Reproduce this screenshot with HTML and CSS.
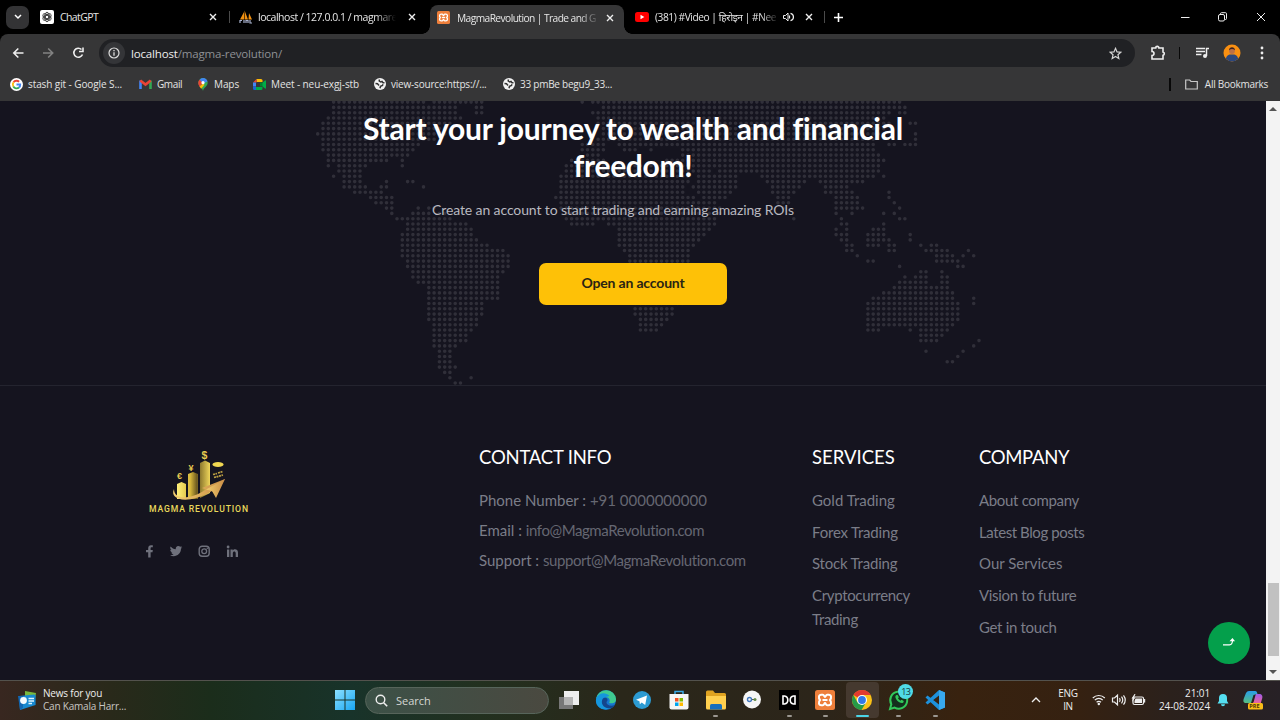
FILE: index.html
```
<!DOCTYPE html>
<html lang="en">
<head>
<meta charset="utf-8">
<title>MagmaRevolution | Trade and Grow</title>
<link rel="stylesheet" href="styles.css">
</head>
<body>
<svg class="defs" width="0" height="0">
  <symbol id="x" viewBox="0 0 8 8"><path d="M1 1l6 6M7 1L1 7" stroke="#eee" stroke-width="1.400"/></symbol>
  <symbol id="globe" viewBox="0 0 12 12"><circle cx="6" cy="6" r="6" fill="#f2f2f2"/><path d="M1.500 5.500l2 .3 1.500 1.700M5.500 1.500L5.200 3l1.500 1 1.300-.5 1 1.300h1.500M6 10.300l.5-2 2-.8.500-1.200" fill="none" stroke="#333" stroke-width="1.500"/></symbol>
  <symbol id="xampp" viewBox="0 0 20 20"><rect width="20" height="20" rx="2.500" fill="#ee7f3b"/><path d="M6.300 4.700h1.500c1.500 0 1.400 2.300 2.200 2.300s.7-2.300 2.200-2.300h1.500c2.800 0 3 3.300 1.300 5.300 1.700 2 1.500 5.300-1.300 5.300h-1.500c-1.500 0-1.400-2.300-2.200-2.300s-.7 2.300-2.200 2.300H6.300C3.500 15.300 3.300 12 5 10c-1.700-2-1.500-5.300 1.300-5.300z" fill="none" stroke="#fff" stroke-width="2"/><path d="M7.500 10h5" stroke="#fff" stroke-width="2"/></symbol>
</svg>
<div class="screen">
  <header class="tabs">
    <div class="tabsearch"><svg width="8" height="6" viewBox="0 0 8 6"><path d="M1 1l3 3 3-3" fill="none" stroke="#fff" stroke-width="1.500"/></svg></div>
    <div class="tab t1">
      <svg width="14" height="14" viewBox="0 0 14 14"><rect width="14" height="14" rx="2" fill="#fff"/><g fill="none" stroke="#222" stroke-width=".8"><circle cx="7" cy="7" r="1.700"/><ellipse cx="7" cy="7" rx="2.300" ry="4.700"/><ellipse cx="7" cy="7" rx="2.300" ry="4.700" transform="rotate(60 7 7)"/><ellipse cx="7" cy="7" rx="2.300" ry="4.700" transform="rotate(120 7 7)"/></g></svg>
      <span class="title">ChatGPT</span><svg class="close"><use href="#x"/></svg>
    </div>
    <div class="tab t2">
      <svg width="14" height="14" viewBox="0 0 14 14"><path d="M1 9.500L5 2v7.500zM5.600 9.500V.5L9 9.500zM9.500 9.500L10 3l3 6.500z" fill="#f29111"/><path d="M1 13V10.500h2M5 10v3M7 13v-2.500h2V13M11 10v3h2" fill="none" stroke="#a9b3d0" stroke-width="1.200"/></svg>
      <span class="title fade">localhost / 127.0.0.1 / magmare</span><svg class="close"><use href="#x"/></svg>
    </div>
    <div class="tab t3">
      <svg width="13" height="13"><use href="#xampp"/></svg>
      <span class="title fade">MagmaRevolution | Trade and G</span><svg class="close"><use href="#x"/></svg>
    </div>
    <div class="tab t4">
      <svg width="14" height="10" viewBox="0 0 14 10"><rect width="14" height="10" rx="2.500" fill="#f00"/><path d="M5.500 2.800v4.400L9.300 5z" fill="#fff"/></svg>
      <span class="title fade">(381) #Video | हिरोइन | #Nee</span>
      <svg class="vol" width="11" height="10" viewBox="0 0 11 10"><path d="M.5 3.500h2L5 1v8L2.500 6.500h-2z" fill="none" stroke="#eee"/><path d="M6.500 3.500v3M7.500 1.300a3.800 3.800 0 0 1 0 7.400" fill="none" stroke="#eee" stroke-width="1.200"/></svg>
      <svg class="close"><use href="#x"/></svg>
    </div>
    <svg class="plus" width="9" height="9" viewBox="0 0 9 9"><path d="M4.500 0v9M0 4.500h9" stroke="#fff" stroke-width="1.600"/></svg>
    <svg class="wctl" width="83" height="12" viewBox="0 0 83 12"><g fill="none" stroke="#eee" stroke-width="1"><path d="M1 6.500h8.500"/><rect x="38.500" y="3.500" width="6" height="6.500" rx="1.500"/><path d="M40.500 3.500V2.700a1 1 0 0 1 1-1h4a1 1 0 0 1 1 1v4.800a1 1 0 0 1-1 1h-1M77 2l8 8M85 2l-8 8"/></g></svg>
  </header>

  <div class="toolbar">
    <svg class="nav" width="74" height="14" viewBox="0 0 74 14"><g fill="none" stroke-width="1.600"><path d="M11.500 7H2M6.300 2.500L1.800 7l4.500 4.500" stroke="#eee"/><path d="M31 7h9.500M36.200 2.500L40.700 7l-4.500 4.500" stroke="#828282"/><path d="M70.500 8.500a4.500 4.500 0 1 1-1-5" stroke="#eee"/><path d="M71 1.500v4h-4" stroke="#eee"/></g></svg>
    <div class="omni">
      <span class="info"><svg width="12" height="12" viewBox="0 0 12 12"><circle cx="6" cy="6" r="5" fill="none" stroke="#ddd" stroke-width="1.200"/><path d="M6 5.200v3.600M6 3v1.300" stroke="#ddd" stroke-width="1.300"/></svg></span>
      <span class="url"><b>localhost</b>/magma-revolution/</span>
      <svg width="13" height="13" viewBox="0 0 24 24"><path d="M12 2.500l2.800 6.500 7 .6-5.300 4.700 1.600 6.900-6.100-3.700-6.100 3.700 1.600-6.900L2.200 9.600l7-.6z" fill="none" stroke="#d5d5d5" stroke-width="2.200"/></svg>
    </div>
    <svg class="tools" width="122" height="18" viewBox="0 0 122 18"><path d="M2 4h3.700a1.600 1.600 0 0 1 3.200 0H13v4a1.700 1.700 0 0 1 0 3.300V15H2v-3.500a2 2 0 0 0 0-4z" fill="none" stroke="#eee" stroke-width="1.600"/><path d="M29.500 3v12" stroke="#080808"/><path d="M46 4.500h9M46 7.500h9M46 10.500h5.500" stroke="#eee" stroke-width="1.500"/><path d="M56.500 12V4.500H59" fill="none" stroke="#eee" stroke-width="1.500"/><circle cx="55" cy="12" r="2" fill="#eee"/><circle cx="82" cy="9" r="8.500" fill="#f99012"/><path d="M75.800 14.800c1-4 3-4.300 6.200-4.300s5.200.3 6.200 4.300A8.500 8.500 0 0 1 75.800 14.800z" fill="#2d477b"/><circle cx="82" cy="7" r="2.900" fill="#bd7046"/><path d="M79 6.200c0-4 6-4 6 0-2-1.700-4-1.700-6 0z" fill="#3a2221"/><g fill="#eee"><circle cx="112" cy="4" r="1.400"/><circle cx="112" cy="9" r="1.400"/><circle cx="112" cy="14" r="1.400"/></g></svg>
  </div>

  <div class="bookmarks">
    <span class="bm b1"><svg width="13" height="13" viewBox="0 0 14 14"><circle cx="7" cy="7" r="7" fill="#fff"/><g fill="none" stroke-width="2"><path d="M3.800 4.600A4 4 0 0 1 9.800 4" stroke="#ea4335"/><path d="M3.600 9.200a4.200 4.200 0 0 1 .2-4.600" stroke="#fbbc05"/><path d="M9.700 10.200a4 4 0 0 1-6.100-1" stroke="#34a853"/><path d="M7 7h4a4 4 0 0 1-1.300 3.200" stroke="#4285f4"/></g></svg>stash git - Google S...</span>
    <span class="bm b2"><svg width="13" height="10" viewBox="0 0 13 10"><path d="M1.500 10V1.500" stroke="#4285f4" stroke-width="2.600"/><path d="M11.500 10V1.500" stroke="#34a853" stroke-width="2.600"/><path d="M1.300 1.500l5.200 4 5.200-4" fill="none" stroke="#ea4335" stroke-width="2.600"/></svg>Gmail</span>
    <span class="bm b3"><svg width="10" height="13" viewBox="0 0 10 13"><path d="M5 13C4.500 9.500.3 8.300.3 4.700A4.700 4.700 0 0 1 5 0a4.700 4.700 0 0 1 4.700 4.700C9.700 8.300 5.500 9.500 5 13z" fill="#34a853"/><path d="M5 0a4.700 4.700 0 0 1 4.500 3.500L5 5.500 1.500 2A4.700 4.700 0 0 1 5 0z" fill="#4285f4"/><path d="M1.500 1.800L5 5 1.500 8.800C-.2 6.300-.2 3.700 1.500 1.800z" fill="#ea4335"/><path d="M1.500 8.500L5 5.500l1.500 1.200-3.300 4.100z" fill="#fbbc04"/><circle cx="5" cy="4.700" r="1.600" fill="#fff"/></svg>Maps</span>
    <span class="bm b4"><svg width="13" height="11" viewBox="0 0 13 11"><path d="M3.500 0H8a1.500 1.500 0 0 1 1.500 1.500V3H3.500z" fill="#fbbc04"/><path d="M3.500 0v3.500H0z" fill="#ea4335"/><path d="M0 3.500h3v4H0z" fill="#4285f4"/><path d="M0 7.500h3V11H1.500A1.500 1.500 0 0 1 0 9.500z" fill="#1967d2"/><path d="M3 8h6.500v1.500A1.500 1.500 0 0 1 8 11H3zM9 4l3-2.500q1-.5 1 .5v7q0 1-1 .5L9 7z" fill="#00ac47"/><path d="M7 3.500h2.500v4H7z" fill="#00832d"/></svg>Meet - neu-exgj-stb</span>
    <span class="bm b5"><svg width="12" height="12"><use href="#globe"/></svg>view-source:https://...</span>
    <span class="bm b6"><svg width="12" height="12"><use href="#globe"/></svg>33 pmBe begu9_33...</span>
    <span class="bm all"><svg width="13" height="11" viewBox="0 0 13 11"><path d="M.7 1h4l1.300 1.500h6.300V10H.7z" fill="none" stroke="#c8c8c8" stroke-width="1.200"/></svg>All Bookmarks</span>
  </div>

  <div class="viewport">
    <main class="page">
      <section class="hero">
        <svg class="map" width="1266" height="284" viewBox="0 0 1266 284"><path id="dots"/></svg>
        <h1>Start your journey to wealth and financial<br><span class="h2nd">freedom!</span></h1>
        <p>Create an account to start trading and earning amazing ROIs</p>
        <a class="cta">Open an account</a>
      </section>
      <footer>
        <div class="brand">
          <svg width="104" height="66" viewBox="0 0 104 66">
            <defs>
              <linearGradient id="gold"><stop offset="0" stop-color="#fff07a"/><stop offset=".4" stop-color="#d9b93b"/><stop offset=".6" stop-color="#6d5a20"/><stop offset="1" stop-color="#f0d65a"/></linearGradient>
              <linearGradient id="swoosh"><stop offset="0" stop-color="#f3cf70"/><stop offset="1" stop-color="#c88b45"/></linearGradient>
            </defs>
            <path d="M31 34l4.500-2 4.500 2v15h-9zM42 24l5-2 5 2v25H42zM54 13l5-2.500 5 2.500v30l-10 5z" fill="url(#gold)"/>
            <path d="M28 39c-5 10 12 17 38 2l3 2.500L79 29 56 38l4 1.500C46 49 28 51 28 39z" fill="url(#swoosh)"/>
            <path d="M60 39.500l6 1.500 4 7L79 29z" fill="url(#swoosh)"/>
            <ellipse cx="72" cy="14.500" rx="5.500" ry="2.500" fill="#f0d751"/>
            <path d="M67 24.500l4-1M72 23l5-1.500M68 27.500l9-2.500" stroke="#bda143" stroke-width="1.800" stroke-dasharray="2 .6"/>
            <g class="coin"><text x="31" y="28.500" font-size="9">€</text><text x="42.500" y="20.500" font-size="9">¥</text><text x="55.500" y="9" font-size="10.500">$</text></g>
            <text class="mark" x="3" y="61.500" textLength="99">MAGMA REVOLUTION</text>
          </svg>
          <svg class="social" width="95" height="13" viewBox="0 0 95 13" fill="#6f717c"><path d="M3.200 12.500V7.200H1V5h2.200V3.400C3.200 1.200 4.300.3 6 .3h1.800v2H6.600c-.8 0-1 .4-1 1.100V5h2.200l-.3 2.200H5.600v5.300z"/><path d="M25 10.200c1.500.1 2.700-.3 3.600-1-1.200-.1-2-.8-2.300-1.800h1.100C26 7 25.300 6 25.300 4.700l1.100.3C25.200 4 24.900 2.800 25.600 1.600c1.400 1.600 3 2.500 5.200 2.700-.4-2 .9-3.300 2.500-3.300.8 0 1.400.3 1.900.8l1.600-.6-1 1.500 1.500-.4-1.300 1.400c0 5.500-5.800 9.300-11 6.500z"/><rect x="54.200" y="1.200" width="10" height="10" rx="3" fill="none" stroke="#6f717c" stroke-width="1.400"/><circle cx="59.200" cy="6.200" r="2.400" fill="none" stroke="#6f717c" stroke-width="1.300"/><circle cx="62.300" cy="3.200" r=".8"/><path d="M82 4.500h2.300V12H82zM85.500 4.500h2.200v1c1.300-2 5.300-1.600 5.300 2V12h-2.300V8.300c0-2.600-2.900-2.400-2.900 0V12h-2.300z"/><circle cx="83.100" cy="2" r="1.400"/></svg>
        </div>
        <div class="contact">
          <h3>CONTACT INFO</h3>
          <p><i class="w0">Phone Number :</i> <span class="w0">+91 0000000000</span></p>
          <p><i class="w0">Email :</i> <span class="w4">info@MagmaRevolution.com</span></p>
          <p><i class="w0">Support :</i> <span class="w4">support@MagmaRevolution.com</span></p>
        </div>
        <div class="links services">
          <h3 class="w0">SERVICES</h3>
          <a class="w0">Gold Trading</a><a>Forex Trading</a><a>Stock Trading</a><a class="w3">Cryptocurrency Trading</a>
        </div>
        <div class="links">
          <h3 class="w3">COMPANY</h3>
          <a class="w3">About company</a><a class="w4">Latest Blog posts</a><a class="w0">Our Services</a><a class="w3">Vision to future</a><a class="w3">Get in touch</a>
        </div>
      </footer>
      <div class="totop"><svg width="14" height="10" viewBox="0 0 14 10"><path d="M1 7.800h6.500c2 0 3-1.500 3-4.500" fill="none" stroke="#fff" stroke-width="1.200"/><path d="M7.500 4.200l3-3.200 2.500 3.200z" fill="#fff"/></svg></div>
    </main>
    <div class="scroll"><span class="up"></span><span class="thumb"></span><span class="down"></span></div>
  </div>

  <div class="taskbar">
    <div class="news">
      <svg width="20" height="21" viewBox="0 0 20 21"><path d="M8 1l11 2-2 12-9-2z" fill="#79b83f"/><path d="M2 6l15-1.500a1.500 1.500 0 0 1 1.600 1.500v9L3 20z" fill="#1688cf"/><path d="M1 6h5v12l-3 2z" fill="#1267b3"/><circle cx="6.500" cy="10.500" r="3.400" fill="#f4fbff"/><path d="M11.500 8.500H17M11.500 11H17M11.500 13.500H15" stroke="#dff4ff" stroke-width="1.300"/></svg>
      <div><b>News for you</b><span>Can Kamala Harr...</span></div>
    </div>
    <svg class="win" width="20" height="20" viewBox="0 0 20 20"><defs><linearGradient id="wb" x2="1" y2="1"><stop stop-color="#8ce0ff"/><stop offset="1" stop-color="#18a6f2"/></linearGradient></defs><path d="M0 0h9.500v9.500H0zM10.500 0H20v9.500h-9.500zM0 10.500h9.500V20H0zM10.500 10.500H20V20h-9.500z" fill="url(#wb)"/></svg>
    <div class="search"><svg width="13" height="13" viewBox="0 0 13 13"><circle cx="5.500" cy="5.500" r="4.300" fill="none" stroke="#eee" stroke-width="1.400"/><path d="M8.700 8.700l3.500 3.500" stroke="#eee" stroke-width="1.600"/></svg>Search</div>
    <div class="apps">
      <span><svg viewBox="0 0 22 22"><rect x="1" y="8" width="14" height="12" fill="#777"/><rect x="6" y="2" width="15" height="14" fill="#eee"/><rect x="6" y="8" width="9" height="8" fill="#b5b5b5"/></svg></span>
      <span><svg viewBox="0 0 22 22"><circle cx="11" cy="11" r="10" fill="#1676cf"/><path d="M1.300 9A10 10 0 0 1 21 10c.3 4-3.500 5-7 4 2-3 0-6-4-6-3.500 0-7 .5-8.700 1z" fill="#3fca91"/><path d="M1.300 9C4 3 11 3 14.500 7L8 9c-1.500 4 0 9 7 10C7 23-1 17 1.300 9z" fill="#1596dd"/><path d="M8 9.500c-3 4 0 10 6.500 9.700 2.500 0 4.500-1.700 5.500-3.200-4 1.800-8.500.3-8.500-2.500 0-1 1-1.500 1-2.500C12.500 8.500 9.500 8 8 9.500z" fill="#14458d"/></svg></span>
      <span><svg viewBox="0 0 22 22"><circle cx="11" cy="11" r="9" fill="#2c9bd3"/><path d="M5 10.700L16 6.500 14.200 16l-3.500-2.500-1.800 1.700-.5-3z" fill="#fff"/></svg></span>
      <span><svg viewBox="0 0 22 22"><path d="M7 5V2.500h8V5" fill="none" stroke="#39a9e7" stroke-width="1.500"/><path d="M1.500 5h19v13.500a2 2 0 0 1-2 2h-15a2 2 0 0 1-2-2z" fill="#f5f5f5"/><path d="M7 9h3.500v3.500H7z" fill="#f25022"/><path d="M11.500 9H15v3.500h-3.500z" fill="#7fba00"/><path d="M7 13.500h3.500V17H7z" fill="#00a4ef"/><path d="M11.500 13.500H15V17h-3.500z" fill="#ffb900"/></svg></span>
      <span class="on"><svg viewBox="0 0 22 22"><path d="M1 3a1.500 1.500 0 0 1 1.500-1.500H8L10 4h9.500A1.500 1.500 0 0 1 21 5.500V10H1z" fill="#dfa321"/><path d="M1 7h20v12a1.500 1.500 0 0 1-1.500 1.500h-17A1.500 1.500 0 0 1 1 19z" fill="#ffd04f"/><path d="M5 20.500v-4A1.500 1.500 0 0 1 6.500 15h9a1.500 1.500 0 0 1 1.500 1.500v4z" fill="#176fbd"/></svg></span>
      <span><svg viewBox="0 0 22 22"><circle cx="11" cy="10.500" r="9" fill="#f6f6f6"/><circle cx="8.500" cy="10.500" r="2" fill="none" stroke="#4277bd" stroke-width="1.400"/><path d="M11 10.500h2" stroke="#555" stroke-width="1.200"/><circle cx="14" cy="10.500" r="1.500" fill="#658b48"/></svg></span>
      <span class="on"><svg viewBox="0 0 22 22"><rect x="1" y="1" width="20" height="20" fill="#000"/><path d="M5 7h1.500q3.300.6 3.300 4t-3.300 4H5zM17 7h-1.500q-3.300.6-3.300 4t3.300 4H17z" fill="none" stroke="#fff" stroke-width="1.600"/></svg></span>
      <span class="on"><svg viewBox="-1 -1 22 22"><use href="#xampp" width="20" height="20"/></svg></span>
      <span class="on active"><svg viewBox="0 0 22 22"><circle cx="11" cy="11" r="10" fill="#fbc116"/><path d="M11 11L2.400 5.900A10 10 0 0 1 19.700 6H11z" fill="#e33b2e"/><path d="M11 11l-4.500 2.400L2.400 5.900A10 10 0 0 0 10.500 21l4.500-7.500z" fill="#269a48"/><circle cx="11" cy="11" r="5" fill="#fff"/><circle cx="11" cy="11" r="3.900" fill="#3379e6"/></svg></span>
      <span class="on"><svg viewBox="0 0 22 22"><path d="M2 20l1.300-4.700a8.500 8.500 0 1 1 3.300 3.300z" fill="#142f1d" stroke="#32c85a" stroke-width="2"/><path d="M7.500 7c-1 2.500 3.500 7.500 7 7 1.500-.5 1.500-2 .5-2.500l-1.500-.7-1.200 1-2.300-2.300.8-1.300L10 6.500C9 5.800 8 6 7.500 7z" fill="#32c85a"/></svg><em>13</em></span>
      <span class="on"><svg viewBox="0 0 22 22"><path d="M15 1l6 2.500v15L15 21 1.500 8.500l2-2L15 15.500V6.500L3.500 15.500l-2-2z" fill="#1d91dc"/><path d="M15 1l6 2.500v15L15 21z" fill="#38a9ef"/></svg></span>
    </div>
    <svg class="chev" width="10" height="6" viewBox="0 0 10 6"><path d="M1 5l4-4 4 4" fill="none" stroke="#eee" stroke-width="1.300"/></svg>
    <div class="lang">ENG<br>IN</div>
    <svg class="tray" width="54" height="14" viewBox="0 0 54 14"><g fill="none" stroke="#eee" stroke-width="1.200"><path d="M.8 5a8.500 8.500 0 0 1 12 0M2.800 7.200a5.500 5.500 0 0 1 8 0M4.600 9.300a3.200 3.200 0 0 1 4.400 0"/><path d="M20.500 5h2L25.500 2.200v9.600L22.500 9h-2zM27.500 5.200q1.300 1.800 0 3.600M29.500 3.700q2.500 3.300 0 6.600M31.500 2.300q3.500 4.700 0 9.400"/><rect x="41" y="4" width="10.500" height="7.500" rx="1.500"/></g><circle cx="6.800" cy="11" r="1.200" fill="#eee"/><path d="M43.500 5.500h6.500V10h-7.500V8zM52 6h1.200v3.500H52zM42.500 1l-3 4.500H41L40 9l3.500-4.500H42L43.500 1z" fill="#eee"/></svg>
    <div class="clock">21:01<br>24-08-2024</div>
    <svg class="bell" width="12" height="14" viewBox="0 0 12 14"><path d="M.5 10.500L2 8V5a4 4 0 0 1 8 0v3l1.500 2.500zM4 11.300h4a2 2 0 0 1-4 0z" fill="#55dff1"/></svg>
    <svg class="copilot" width="21" height="20" viewBox="0 0 21 20"><defs><linearGradient id="ca" x2="0" y2="1"><stop stop-color="#299de9"/><stop offset="1" stop-color="#56bd80"/></linearGradient><linearGradient id="cb" x2="0" y2="1"><stop stop-color="#a05bea"/><stop offset="1" stop-color="#f16593"/></linearGradient></defs><path d="M6 1h6c2 0 2 1.500 2.500 3l-4 1L8 13H3C0 13 0 10.500 1 8l2-5q1-2 3-2z" fill="url(#ca)"/><path d="M13 4h3c3 0 4 2 3 5l-1.500 5H8c3 0 3-4 4-7q.5-2 1-3z" fill="url(#cb)"/><rect x="5" y="13" width="15" height="6.500" rx="1.500" fill="#f9bd18"/><text x="6.300" y="18.400">PRE</text></svg>
  </div>
</div>
<script src="map.js"></script>
</body>
</html>
```
FILE: styles.css
```
* { box-sizing: border-box; }
body { margin: 0; background: #000; font-family: "Open Sans", "Noto Sans", sans-serif; }
.defs { position: absolute; }
svg { flex: none; display: block; }
.screen { width: 1280px; height: 720px; display: flex; flex-direction: column; overflow: hidden; }

.tabs { height: 34px; display: flex; align-items: center; background: #000; color: #e6e6e6; font-size: 10.5px; letter-spacing: -.48px; }
.tabsearch { width: 23px; height: 23px; margin-left: 6px; border-radius: 7px; background: #333335; display: flex; align-items: center; justify-content: center; }
.tab { display: flex; align-items: center; height: 34px; }
.title { flex: 1; min-width: 0; overflow: hidden; white-space: nowrap; margin-left: 7px; line-height: 20px; }
.fade { mask-image: linear-gradient(90deg, #000 85%, transparent 100%); }
.close { width: 8px; height: 8px; margin-left: 12px; }
.t1 { width: 189px; padding-left: 11px; padding-right: 1px; }
.t1 .title { margin-left: 6px; letter-spacing: -.6px; }
.t2 { width: 212px; padding-left: 21px; padding-right: 14px; background: linear-gradient(#4b4b4b, #4b4b4b) 11px 11px / 1px 12px no-repeat; }
.t2 .title { margin-left: 5px; }
.t3 { position: relative; width: 194px; height: 29px; align-self: flex-end; background: #363637; border-radius: 8px 8px 0 0; padding: 0 10px 4px 7px; font-size: 10.2px; letter-spacing: -.56px; }
.t3::before, .t3::after { content: ""; position: absolute; bottom: 0; width: 8px; height: 8px; }
.t3::before { left: -8px; background: radial-gradient(circle at 0 0, transparent 7.5px, #363637 8px); }
.t3::after { right: -8px; background: radial-gradient(circle at 100% 0, transparent 7.5px, #363637 8px); }
.t3 .close { margin-left: 6px; }
.t4 { width: 190px; padding-left: 11px; font-size: 10.2px; letter-spacing: -.44px; }
.t4 .title { margin-left: 6px; }
.t4 .vol { margin-left: 4px; }
.t4 .close { margin-left: 11px; margin-right: 2px; }
.plus { margin-left: 8px; }
.tabs .t4 { width: 202px; padding-right: 11px; background: linear-gradient(#4b4b4b, #4b4b4b) 200px 11px / 1px 12px no-repeat; }
.wctl { margin-left: auto; margin-right: 17px; overflow: visible; }

.toolbar { height: 36px; background: #363637; border-radius: 8px 8px 0 0; display: flex; align-items: center; padding: 2px 0 0 12px; }
.omni { margin-left: 13px; width: 1036px; height: 28px; border-radius: 14px; background: #202124; display: flex; align-items: center; padding: 0 13px 0 4px; }
.info { width: 22px; height: 22px; border-radius: 50%; background: #343538; display: flex; align-items: center; justify-content: center; }
.url { flex: 1; margin-left: 6px; font-size: 11.5px; letter-spacing: -.16px; color: #8e9094; }
.url b { font-weight: 400; color: #eee; }
.tools { margin-left: 15px; }
.bookmarks { height: 31px; background: #363637; display: flex; align-items: center; padding-left: 10px; padding-bottom: 3px; font-size: 10px; letter-spacing: -.09px; color: #e4e4e4; }
.bm { display: flex; align-items: center; gap: 5px; white-space: nowrap; }
.b1 { width: 129px; }
.b2 { width: 59px; letter-spacing: -.4px; }
.b3 { width: 55px; gap: 6px; }
.b4 { width: 121px; }
.b5 { width: 129px; letter-spacing: -.2px; }
.b6 { letter-spacing: -.25px; }
.all { margin-left: auto; padding: 0 12px 0 14px; gap: 7px; letter-spacing: -.27px; border-left: 2px solid #080808; height: 13px; }

.viewport { flex: 1; display: flex; min-height: 0; }
.page { width: 1266px; position: relative; background: #15141f; font-family: Lato, sans-serif; overflow: hidden; }
.hero { height: 285px; position: relative; border-bottom: 1px solid #24242f; text-align: center; display: flex; flex-direction: column; align-items: center; }
.map { position: absolute; left: 0; top: 0; }
#dots { fill: none; stroke: #302f39; stroke-width: 3.6; stroke-linecap: round; }
h1, .hero p, .cta { position: relative; margin: 0; }
h1 { margin-top: 9px; font-size: 30px; line-height: 37px; font-weight: 700; letter-spacing: -.18px; color: #fff; }
.h2nd { letter-spacing: -.3px; }
.hero p { width: 402px; margin: 15px 40px 0 0; font-size: 14px; letter-spacing: -.12px; line-height: 22px; color: #b9b9c0; }
.cta { margin-top: 42px; width: 188px; height: 42px; border-radius: 7px; background: #fec107; color: #2a2413; font-size: 14px; font-weight: 700; letter-spacing: -.17px; line-height: 40px; }

footer { display: flex; padding-top: 59px; padding-left: 146px; font-size: 15px; color: #7b7d88; }
.brand { width: 333px; padding-top: 5px; }
.coin text { fill: #e9cc51; font-family: "Liberation Sans", sans-serif; font-weight: 700; }
.mark { fill: #ead95b; font: 500 8.6px Roboto, sans-serif; }
.social { margin: 29px 0 0 -1px; }
h3 { margin: 0; font-size: 18.5px; line-height: 24px; font-weight: 400; letter-spacing: -.2px; color: #fff; }
.contact { width: 333px; }
.contact h3 { margin-bottom: 16px; }
.contact p { margin: 0; line-height: 30px; }
.contact i { font-style: normal; }
.contact span { color: #656772; }
.links { width: 167px; padding-right: 60px; display: flex; flex-direction: column; gap: 8px; }
.links + .links { width: 200px; padding-right: 0; }
.links h3 { margin-bottom: 12px; }
.links a { line-height: 23.7px; letter-spacing: -.2px; }
.contact .w0, .links .w0 { letter-spacing: 0; }
.links .w3 { letter-spacing: -.33px; }
.contact .w4, .links .w4 { letter-spacing: -.42px; }
.totop { position: absolute; left: 1208px; top: 521px; width: 42px; height: 42px; border-radius: 50%; background: #049f4b; display: flex; align-items: center; justify-content: center; padding-bottom: 3px; }

.scroll { width: 14px; background: #f3f3f3; display: flex; flex-direction: column; align-items: center; }
.up, .down { border: 4px solid transparent; width: 0; height: 0; }
.up { border-bottom: 4px solid #555; border-top: 0; margin-top: 6px; }
.thumb { width: 11px; height: 73px; background: #c1c1c1; margin-top: 472px; }
.down { border-top: 4px solid #555; border-bottom: 0; margin-top: 14px; }

.taskbar { height: 40px; flex: none; border-top: 1px solid #53524d; display: flex; align-items: center; color: #eee; font-size: 10px; line-height: 13px; background: linear-gradient(90deg, #382720 0, #29291a 110px, #1b2d1b 210px, #18332a 350px, #22301f 480px, #2a271a 620px, #2c251a 820px, #38220f 960px, #352111 1080px, #2b211c 1170px, #272126 1280px); padding-bottom: 1px; }
.news { width: 335px; padding-left: 17px; display: flex; align-items: center; gap: 6px; letter-spacing: -.2px; }
.news b, .news span { display: block; font-weight: 400; }
.news span { color: #c9c6c2; }
.search { margin-left: 10px; width: 184px; height: 27px; border-radius: 14px; background: linear-gradient(90deg, #3c5147, #4a4940); border: 1px solid #57655b; display: flex; align-items: center; padding-left: 9px; gap: 8px; font-size: 11px; color: #d5d7d3; }
.apps { display: flex; margin-left: 2px; width: 403px; }
.apps > span { position: relative; width: 36.6px; height: 36px; display: flex; align-items: center; justify-content: center; flex: none; }
.apps svg { width: 22px; height: 22px; }
.apps .on::after { content: ""; position: absolute; bottom: 1px; left: 16px; width: 5px; height: 2px; border-radius: 1px; background: #9b9791; }
.apps .active { background: #45392f; border-radius: 4px; width: 33px; margin: 0 1.8px; }
.apps .active::after { width: 13px; left: 10px; background: #4bd5e8; }
.apps em { position: absolute; left: 18px; top: 2px; width: 15px; height: 15px; border-radius: 50%; background: #50dbe6; color: #15373b; font-size: 9px; line-height: 15px; font-style: normal; text-align: center; letter-spacing: -.5px; }
.chev { margin-left: 77px; }
.lang { width: 24px; margin-left: 15px; text-align: center; letter-spacing: -.3px; white-space: nowrap; }
.tray { margin-left: 12px; }
.clock { width: 58px; margin-left: 6px; text-align: right; letter-spacing: -.12px; }
.bell { margin-left: 7px; }
.copilot { margin-left: 14px; }
.copilot text { font: 700 5.5px "Open Sans", sans-serif; fill: #49350a; }
```
FILE: map.js
```
// Inclusive column runs of the dotted world map, one string per row.
const rows = [
  "3-20 22-31 50 52-110", "3-26 30-31 54-111", "3-26 30-31 52-108 110-111", "2-27 53-107",
  "1-25 53-108 112-113", "1-24 54-107", "0-24 54-106 113", "1-22 53-105 113",
  "1-19 50-54 57-63 64-105 108-109 111-113", "1-18 50-54 58-60 63 69-105", "2-17 51-53 69-106",
  "2-13 16 48-54 66-107", "2 4-9 16 47-57 60-106", "4-8 47-74 76-106", "3 5-8 46-70 72-79 84-105 107",
  "5-8 13 17-18 46-70 72-79 85-92 95-103", "5-9 12-13 20 46-69 71-79 86-91 96-100",
  "7-12 46-69 72-78 86-90 96-101 108", "10-14 45-71 73-77 87-89 98-102 108",
  "11-14 46-72 73-75 87-89 98-102 109", "13-14 19 21-22 46-76 88 98-103 110",
  "14 18-21 23-24 47-76 98 101 107 109", "15-25 47-75 90 99 110-111", "17-28 48-52 55-75 99-100 107",
  "17-29 57-74 98 100 105-107", "16-29 57-73 98-100 104-107 112", "16-30 57-72 99-100 104-108 112",
  "16-32 57-71 100-101 104-106 108-109 114 116-117", "16-35 58-70 100-101 108-109 115-119 123",
  "16-36 59-70 102 117-120 122 124", "17-36 59-70 104-105 117-121", "17-36 59-70 110 121-122",
  "18-35 60-70 114-115 118", "18-34 60-70 111 113-115 118-119", "19-34 60-69 110-115 118-119",
  "21-34 60-69 109-119", "21-34 60-69 107-120", "21-34 60-69 105-120 124", "21-31 60-69 104-121 124",
  "21-31 60-67 104-121", "21-31 60-67 104-121", "21-30 61-66 104-121", "22-30 61-65 104-120",
  "22-29 61-64 104-106 112 114-119", "22-28 114-118", "22-28 114-117 125", "22-26 124", "23-25 115 122",
  "23-25 121", "23-25 119-120", "23-26", "24-25", "25 29", "26-27"
];
let d = "";
rows.forEach((row, r) => row.split(" ").forEach(run => {
  const [a, b = a] = run.split("-").map(Number);
  for (let c = a; c <= b; c++) d += `M${(317.7 + c * 5.29).toFixed(1)} ${(1.1 + r * 5.3).toFixed(1)}h.01`;
}));
document.getElementById("dots").setAttribute("d", d);
```
